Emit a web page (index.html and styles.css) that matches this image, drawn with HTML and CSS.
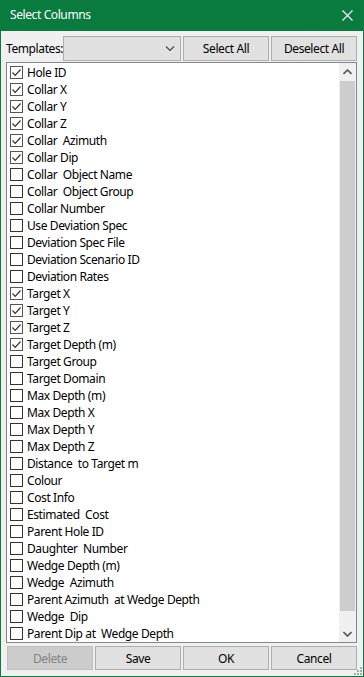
FILE: index.html
```html
<!DOCTYPE html>
<html lang="en">
<head>
    <meta charset="UTF-8">
    <meta name="viewport" content="width=device-width, initial-scale=1.0">
    <title>Select Columns</title>
    <link rel="stylesheet" href="styles.css">
</head>
<body>

    <div class="window">
        <!-- Title bar -->
        <div class="titlebar">
            <span class="title">Select Columns</span>
            <svg class="close" width="11" height="11" viewBox="0 0 11 11">
                <path d="M0.5 0.5 L10.5 10.5 M10.5 0.5 L0.5 10.5" stroke="#fff" stroke-width="1.1" fill="none"/>
            </svg>
        </div>

        <!-- Templates row -->
        <div class="toolbar">
            <span class="label">Templates:</span>
            <div class="combo">
                <svg width="10" height="6" viewBox="0 0 10 6">
                    <path d="M1 0.5 L5 4.5 L9 0.5" stroke="#444" stroke-width="1.1" fill="none"/>
                </svg>
            </div>
            <button class="btn">Select All</button>
            <button class="btn">Deselect All</button>
        </div>

        <!-- Column list -->
        <div class="listbox">
            <ul class="items" id="items"></ul>
            <div class="scrollbar">
                <div class="arrow">
                    <svg width="9" height="6" viewBox="0 0 9 6"><path d="M0.5 5 L4.5 1 L8.5 5" stroke="#555" stroke-width="1.6" fill="none"/></svg>
                </div>
                <div class="track"><div class="thumb"></div></div>
                <div class="arrow">
                    <svg width="9" height="6" viewBox="0 0 9 6"><path d="M0.5 1 L4.5 5 L8.5 1" stroke="#555" stroke-width="1.6" fill="none"/></svg>
                </div>
            </div>
        </div>

        <!-- Buttons -->
        <div class="actions">
            <button class="btn" disabled>Delete</button>
            <button class="btn">Save</button>
            <button class="btn">OK</button>
            <button class="btn">Cancel</button>
        </div>

        <div class="grip">
            <svg width="8" height="8" viewBox="0 0 8 8" fill="#aaa">
                <rect x="6" y="0" width="2" height="2"/>
                <rect x="3" y="3" width="2" height="2"/><rect x="6" y="3" width="2" height="2"/>
                <rect x="0" y="6" width="2" height="2"/><rect x="3" y="6" width="2" height="2"/><rect x="6" y="6" width="2" height="2"/>
            </svg>
        </div>
    </div>

    <script>
        const columns = [
            ['Hole ID', true], ['Collar X', true], ['Collar Y', true], ['Collar Z', true],
            ['Collar  Azimuth', true], ['Collar Dip', true], ['Collar  Object Name', false],
            ['Collar  Object Group', false], ['Collar Number', false], ['Use Deviation Spec', false],
            ['Deviation Spec File', false], ['Deviation Scenario ID', false], ['Deviation Rates', false],
            ['Target X', true], ['Target Y', true], ['Target Z', true], ['Target Depth (m)', true],
            ['Target Group', false], ['Target Domain', false], ['Max Depth (m)', false],
            ['Max Depth X', false], ['Max Depth Y', false], ['Max Depth Z', false],
            ['Distance  to Target m', false], ['Colour', false], ['Cost Info', false],
            ['Estimated  Cost', false], ['Parent Hole ID', false], ['Daughter  Number', false],
            ['Wedge Depth (m)', false], ['Wedge  Azimuth', false], ['Parent Azimuth  at Wedge Depth', false],
            ['Wedge  Dip', false], ['Parent Dip at  Wedge Depth', false]
        ];

        const list = document.getElementById('items');
        columns.forEach(([name, checked]) => {
            const li = document.createElement('li');
            li.innerHTML = `
                <span class="check${checked ? ' on' : ''}">
                    ${checked ? '<svg width="11" height="11" viewBox="0 0 11 11"><path d="M1.5 5.5 L4.2 8.3 L9.5 2.5" stroke="#333" stroke-width="1.2" fill="none"/></svg>' : ''}
                </span>
                <span class="name">${name}</span>
            `;
            list.appendChild(li);
        });
    </script>

</body>
</html>
```

FILE: styles.css
```css
body {
    margin: 0;
    font-family: 'Noto Sans', 'Liberation Sans', sans-serif;
    font-size: 12px;
    letter-spacing: -0.4px;
    color: #000;
    background: #fff;
}

.window {
    width: 364px;
    height: 677px;
    box-sizing: border-box;
    border: 1px solid #0a7b3e;
    border-top: none;
    background: #f0f0f0;
    display: flex;
    flex-direction: column;
    position: relative;
}

.titlebar {
    height: 31px;
    margin: 0 -1px;
    background: #0a7b3e;
    color: #fff;
    display: flex;
    align-items: center;
    justify-content: space-between;
    padding: 0 10px 0 10px;
}

.title {
    font-size: 12px;
    line-height: 1;
    padding-bottom: 1px;
}

.close {
    margin-right: 1px;
}

.toolbar {
    display: flex;
    align-items: center;
    height: 25px;
    margin-top: 5px;
    padding-left: 5px;
}

.label {
    width: 57px;
    flex: none;
    white-space: nowrap;
}

.combo {
    width: 118px;
    height: 25px;
    box-sizing: border-box;
    border: 1px solid #adadad;
    background: #e1e1e1;
    display: flex;
    align-items: center;
    justify-content: flex-end;
    padding-right: 5px;
    margin-right: 2px;
}

.btn {
    width: 86px;
    height: 25px;
    box-sizing: border-box;
    border: 1px solid #adadad;
    background: #e1e1e1;
    font-family: inherit;
    font-size: 12px;
    letter-spacing: inherit;
    color: #000;
    padding: 0;
    margin: 0;
}

.toolbar .btn + .btn {
    margin-left: 2px;
}

.listbox {
    margin: 1px 6px 0 5px;
    height: 581px;
    box-sizing: border-box;
    border: 1px solid #828790;
    background: #fff;
    display: flex;
}

.items {
    list-style: none;
    margin: 0;
    padding: 1px 0 0 3px;
    flex: 1;
    overflow: hidden;
}

.items li {
    height: 17px;
    display: flex;
    align-items: center;
}

.check {
    width: 13px;
    height: 13px;
    box-sizing: border-box;
    border: 1px solid #333;
    background: #fff;
    display: flex;
    align-items: center;
    justify-content: center;
    margin-right: 4px;
    flex: none;
}

.check.on {
    border-color: #555;
}

.name {
    white-space: pre;
    line-height: 17px;
}

.scrollbar {
    width: 17px;
    display: flex;
    flex-direction: column;
    background: #f0f0f0;
}

.arrow {
    height: 17px;
    display: flex;
    align-items: center;
    justify-content: center;
}

.track {
    flex: 1;
    padding: 1px 1px 0 1px;
    display: flex;
    flex-direction: column;
}

.thumb {
    height: 530px;
    background: #cdcdcd;
}

.actions {
    display: flex;
    gap: 2px;
    margin-top: 3px;
    padding-left: 6px;
}

.actions .btn {
    height: 24px;
}

.btn:disabled {
    background: #cccccc;
    border-color: #bfbfbf;
    color: #838383;
}

.grip {
    position: absolute;
    right: 1px;
    bottom: 1px;
    line-height: 0;
}
```
